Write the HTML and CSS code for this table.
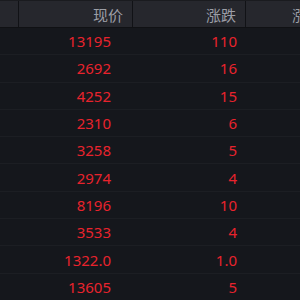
FILE: index.html
```html
<!DOCTYPE html>
<html>
<head>
<meta charset="utf-8">
<link rel="stylesheet" href="styles.css">
</head>
<body>
<div class="table">
  <div class="row head">
    <div class="cell c0"></div>
    <div class="cell c1">现价</div>
    <div class="cell c2">涨跌</div>
    <div class="cell c3">涨跌幅</div>
  </div>
  <div class="row"><div class="cell c0"></div><div class="cell c1">13195</div><div class="cell c2">110</div><div class="cell c3"></div></div>
  <div class="row"><div class="cell c0"></div><div class="cell c1">2692</div><div class="cell c2">16</div><div class="cell c3"></div></div>
  <div class="row"><div class="cell c0"></div><div class="cell c1">4252</div><div class="cell c2">15</div><div class="cell c3"></div></div>
  <div class="row"><div class="cell c0"></div><div class="cell c1">2310</div><div class="cell c2">6</div><div class="cell c3"></div></div>
  <div class="row"><div class="cell c0"></div><div class="cell c1">3258</div><div class="cell c2">5</div><div class="cell c3"></div></div>
  <div class="row"><div class="cell c0"></div><div class="cell c1">2974</div><div class="cell c2">4</div><div class="cell c3"></div></div>
  <div class="row"><div class="cell c0"></div><div class="cell c1">8196</div><div class="cell c2">10</div><div class="cell c3"></div></div>
  <div class="row"><div class="cell c0"></div><div class="cell c1">3533</div><div class="cell c2">4</div><div class="cell c3"></div></div>
  <div class="row"><div class="cell c0"></div><div class="cell c1">1322.0</div><div class="cell c2">1.0</div><div class="cell c3"></div></div>
  <div class="row"><div class="cell c0"></div><div class="cell c1">13605</div><div class="cell c2">5</div><div class="cell c3"></div></div>
</div>
</body>
</html>
```
FILE: styles.css
```css
html, body {
  margin: 0;
  padding: 0;
  background: #15171c;
  overflow: hidden;
}
.table {
  width: 300px;
  font-family: "Noto Sans", "Noto Sans CJK SC", sans-serif;
  font-size: 15px;
}
.row {
  display: grid;
  grid-template-columns: 19px 114px 113px 60px;
  height: 27.3px;
  box-sizing: border-box;
  border-bottom: 1px solid #1c1e23;
  color: #e8232d;
  white-space: nowrap;
}
.row.head {
  height: 28px;
  background: #26272d;
  border-top: 1px solid #1a1b1f;
  border-bottom: 1px solid #101114;
  color: #9c9ea6;
}
.cell {
  display: flex;
  align-items: center;
  justify-content: flex-end;
  padding-right: 9px;
  overflow: hidden;
}
.row:not(.head) .cell.c1 { padding-right: 22px; }
.head .cell {
  border-right: 1px solid #111216;
}
.cell.c0 { padding-right: 0; }
.cell.c3 {
  justify-content: flex-start;
  padding-left: 46px;
  padding-right: 0;
}
```
